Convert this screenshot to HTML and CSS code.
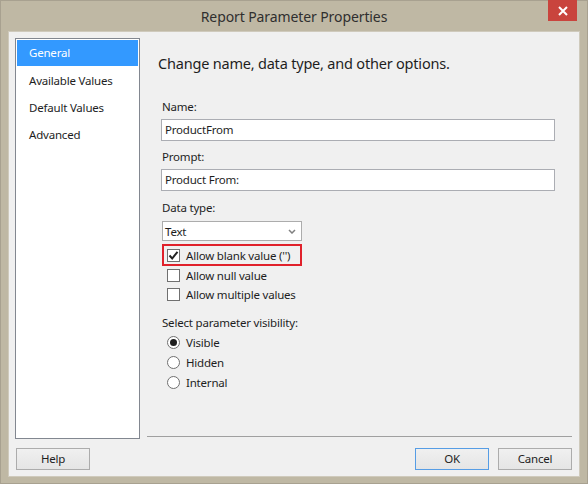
FILE: index.html
```html
<!DOCTYPE html>
<html>
<head>
<meta charset="utf-8">
<link rel="stylesheet" href="styles.css">
</head>
<body>
<div class="window">
  <div class="titlebar">
    <div class="title">Report Parameter Properties</div>
    <div class="close"><svg width="10" height="10" viewBox="0 0 10 10"><path d="M1 1 L9 9 M9 1 L1 9" stroke="#fff" stroke-width="2"/></svg></div>
  </div>
  <div class="client">
    <div class="main">
      <ul class="nav">
        <li class="active">General</li>
        <li>Available Values</li>
        <li>Default Values</li>
        <li>Advanced</li>
      </ul>
      <div class="pane">
        <h1 class="heading">Change name, data type, and other options.</h1>
        <div class="form">
          <div class="label">Name:</div>
          <div class="input">ProductFrom</div>
          <div class="label l2">Prompt:</div>
          <div class="input">Product From:</div>
          <div class="label l3">Data type:</div>
          <div class="select"><span>Text</span><svg width="8" height="5" viewBox="0 0 8 5"><path d="M1 1 L4 4 L7 1" fill="none" stroke="#808080" stroke-width="1.5"/></svg></div>
          <div class="highlight">
            <div class="check-row"><span class="box"><svg width="11" height="11" viewBox="0 0 11 11"><path d="M1.5 5.5 L4.2 8.5 L9.5 1.8" fill="none" stroke="#222" stroke-width="2"/></svg></span>Allow blank value ('')</div>
          </div>
          <div class="check-row"><span class="box"></span>Allow null value</div>
          <div class="check-row"><span class="box"></span>Allow multiple values</div>
          <div class="label l4">Select parameter visibility:</div>
          <div class="radio-row"><span class="radio on"></span>Visible</div>
          <div class="radio-row"><span class="radio"></span>Hidden</div>
          <div class="radio-row"><span class="radio"></span>Internal</div>
        </div>
      </div>
    </div>
    <div class="buttons">
      <div class="btn">Help</div>
      <div class="spacer"></div>
      <div class="btn default">OK</div>
      <div class="btn">Cancel</div>
    </div>
  </div>
</div>
</body>
</html>
```
FILE: styles.css
```css
* { box-sizing: border-box; }
html, body { margin: 0; padding: 0; }
body {
  width: 588px;
  height: 484px;
  overflow: hidden;
  font-family: "Noto Sans", "Open Sans", sans-serif;
  font-size: 11.5px;
  letter-spacing: -0.2px;
  color: #1e1e1e;
  background: #bdb6a2;
}
.window {
  width: 588px;
  height: 484px;
  background: #bfb8a4;
  border: 1px solid #a8a190;
  display: flex;
  flex-direction: column;
}
.titlebar {
  height: 30px;
  display: flex;
  align-items: center;
  justify-content: center;
  position: relative;
}
.title {
  font-size: 14px;
  letter-spacing: -0.1px;
  color: #2f2f2f;
  padding-top: 1px;
}
.close {
  position: absolute;
  right: 10px;
  top: -1px;
  width: 29px;
  height: 21px;
  background: #c9443d;
  display: flex;
  align-items: center;
  justify-content: center;
}
.client {
  margin: 0 7px 0 7px;
  height: 446px;
  background: #f0f0f0;
  border: 1px solid #cfcabc;
  padding: 6px 7px 0 6px;
}
.main {
  display: flex;
  gap: 7px;
  height: 401px;
}
.nav {
  list-style: none;
  margin: 0;
  padding: 1px;
  width: 125px;
  height: 401px;
  background: #fff;
  border: 1px solid #828790;
}
.nav li {
  height: 27px;
  line-height: 27px;
  padding-left: 12px;
  color: #1e1e1e;
}
.nav li.active {
  background: #3399ff;
  color: #fff;
  height: 26px;
  line-height: 26px;
  margin-bottom: 1px;
}
.pane {
  flex: 1;
  height: 399px;
  border-bottom: 1px solid #a0a0a0;
  padding: 15px 0 0 11px;
}
.heading {
  margin: 0;
  font-size: 14.5px;
  letter-spacing: -0.2px;
  font-weight: normal;
  line-height: 20px;
  color: #1e1e1e;
}
.form {
  padding: 26px 0 0 3px;
}
.label {
  line-height: 16px;
  height: 16px;
  padding-left: 1px;
}
.l2 { margin-top: 8px; }
.l3 { margin-top: 9px; }
.l4 { margin-top: 11px; margin-bottom: 1px; }
.input {
  margin-top: 4px;
  width: 394px;
  height: 22px;
  background: #fff;
  border: 1px solid #abadb3;
  line-height: 20px;
  padding-left: 3px;
}
.select {
  margin-top: 5px;
  margin-left: 1px;
  width: 140px;
  height: 20px;
  background: #fff;
  border: 1px solid #acacac;
  display: flex;
  align-items: center;
  justify-content: space-between;
  padding: 0 5px 0 2px;
}
.highlight {
  margin-top: 3px;
  margin-left: 1px;
  width: 140px;
  height: 22px;
  border: 2px solid #e0212b;
  display: flex;
  align-items: center;
}
.highlight .check-row { padding-left: 3px; height: 18px; }
.check-row {
  height: 19px;
  display: flex;
  align-items: center;
  padding-left: 6px;
}
.box {
  width: 13px;
  height: 13px;
  border: 1px solid #707070;
  background: #fff;
  margin-right: 6px;
  display: flex;
  align-items: center;
  justify-content: center;
}
.radio-row {
  height: 20px;
  display: flex;
  align-items: center;
  padding-left: 6px;
}
.radio {
  width: 13px;
  height: 13px;
  border: 1px solid #707070;
  border-radius: 50%;
  background: #fff;
  margin-right: 6px;
  display: flex;
  align-items: center;
  justify-content: center;
}
.radio.on::after {
  content: "";
  width: 7px;
  height: 7px;
  border-radius: 50%;
  background: #1e1e1e;
}
.buttons {
  display: flex;
  gap: 9px;
  margin-top: 9px;
  padding-left: 1px;
}
.spacer { flex: 1; }
.btn {
  width: 74px;
  height: 22px;
  border: 1px solid #acacac;
  background: linear-gradient(#f0f0f0, #e5e5e5);
  text-align: center;
  line-height: 20px;
}
.btn.default {
  border-color: #569de5;
}
```
